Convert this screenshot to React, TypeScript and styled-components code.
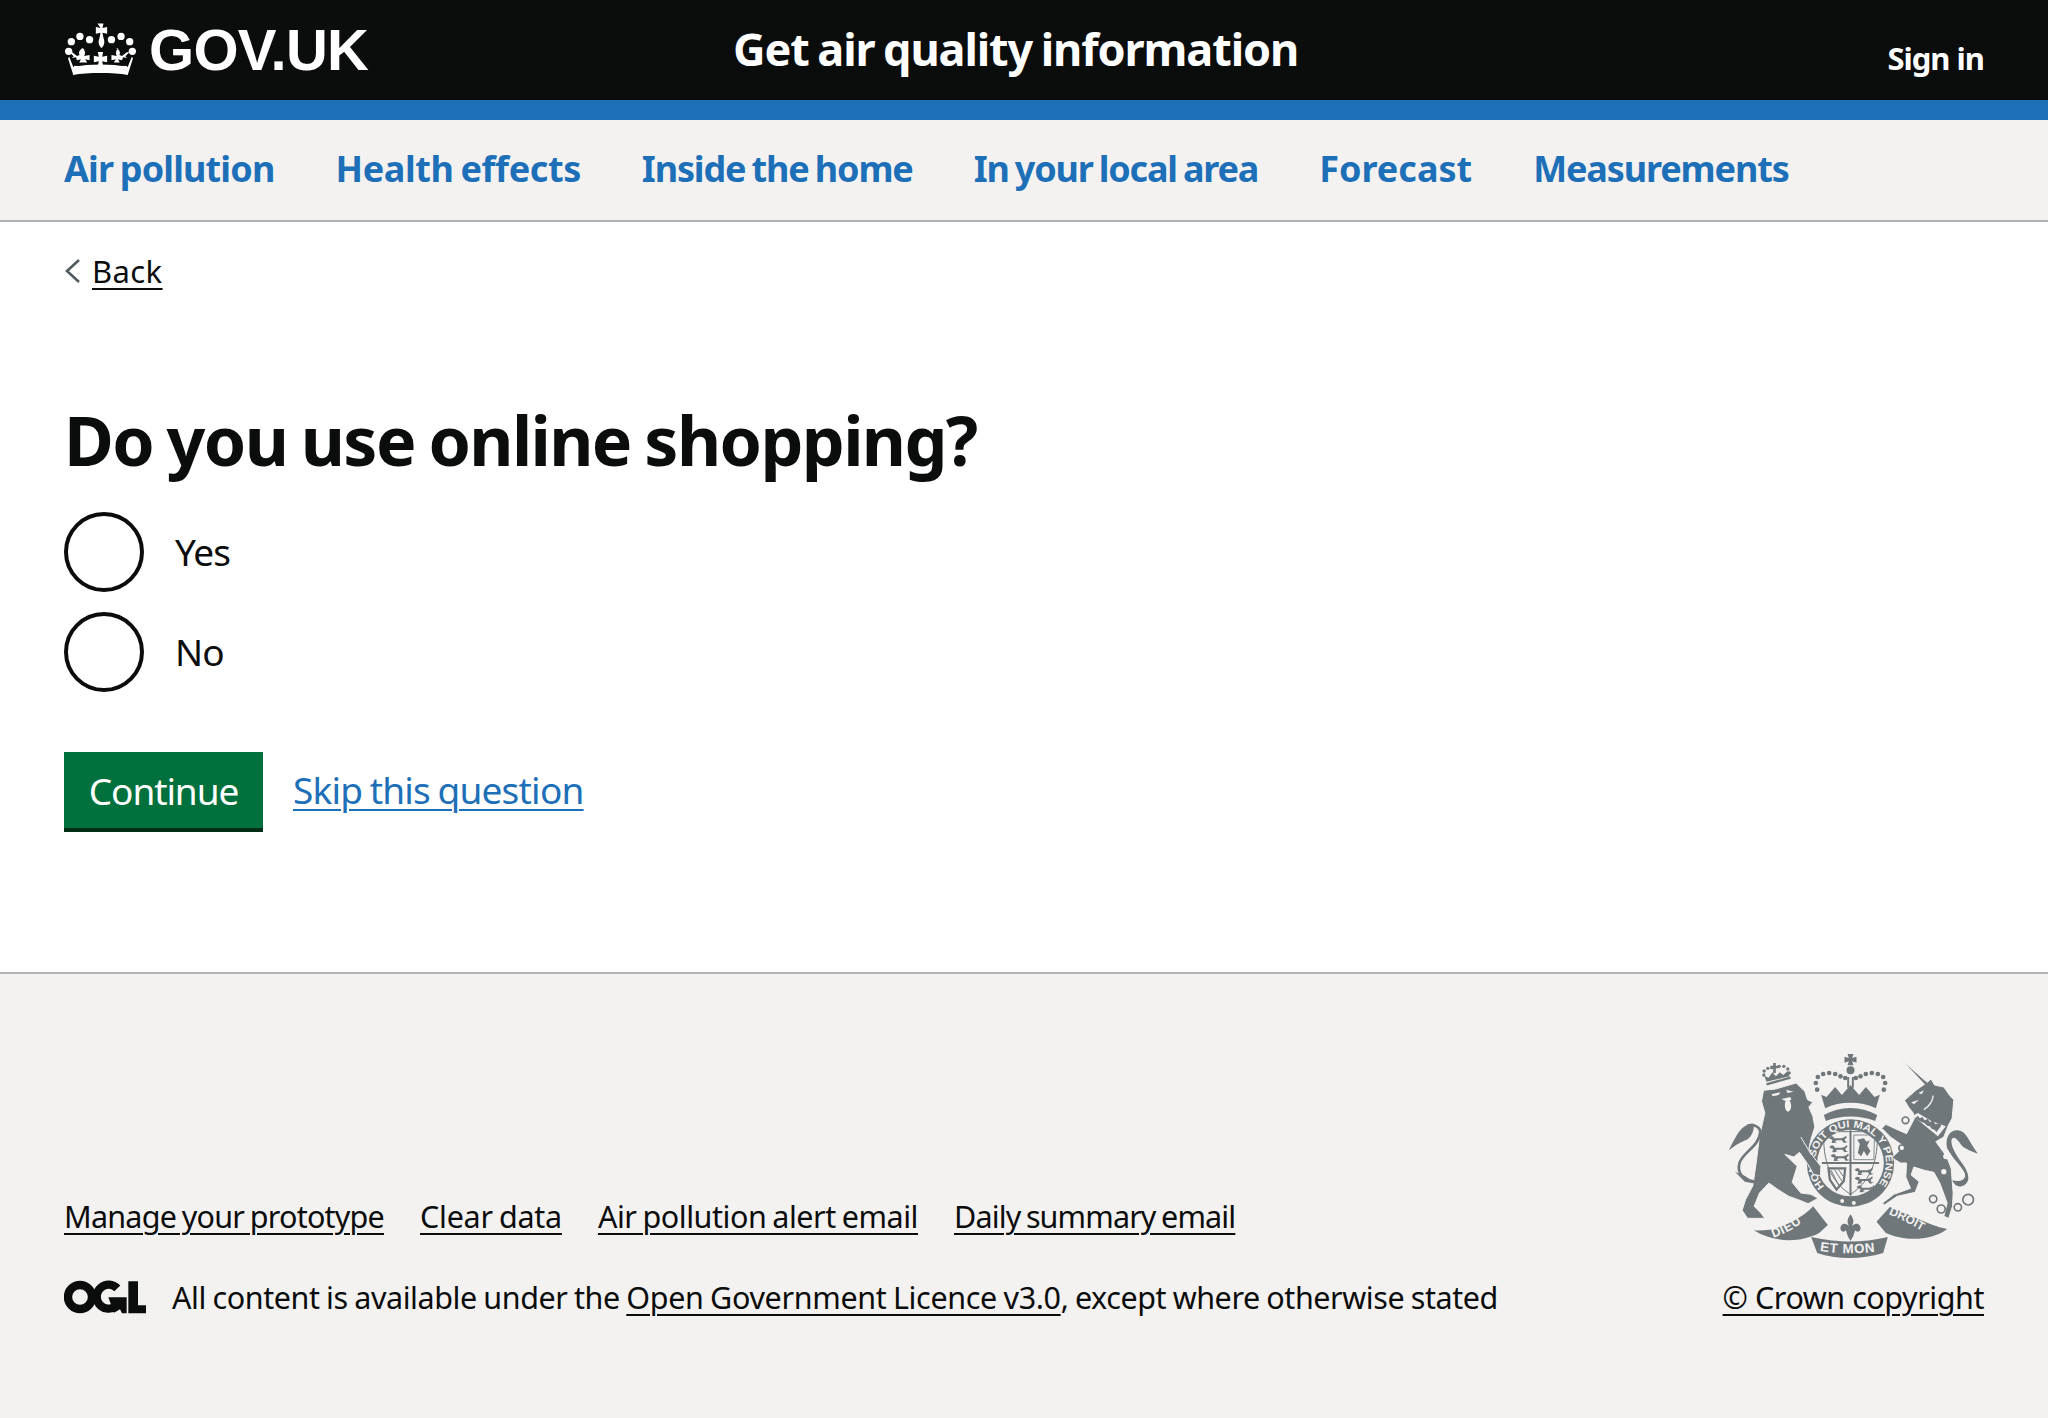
import styled, { createGlobalStyle } from 'styled-components';

const GlobalStyle = createGlobalStyle`
  html, body {
    margin: 0;
    padding: 0;
    background: #fff;
    color: #0b0c0c;
    font-family: "Noto Sans", "Open Sans", Arial, sans-serif;
  }
  * {
    box-sizing: border-box;
  }
`;

const Page = styled.div`
  min-height: 100vh;
  display: flex;
  flex-direction: column;
`;

/** header */
const Header = styled.header`
  height: 120px;
  background: #0b0c0c;
  border-bottom: 20px solid #1d70b8;
  padding: 0 64px;
  display: flex;
  color: #fff;
`;

const Logo = styled.a`
  width: 669px;
  height: 100px;
  display: flex;
  align-items: center;
  gap: 12px;
  padding-bottom: 2px;
  font-family: "Liberation Sans", Arial, sans-serif;
  font-size: 58px;
  font-weight: 700;
  letter-spacing: -0.7px;
`;

const ServiceName = styled.div`
  flex: 1;
  height: 98px;
  line-height: 98px;
  font-size: 45px;
  font-weight: 700;
  letter-spacing: -1.1px;
  word-spacing: -2px;
`;

const SignIn = styled.a`
  align-self: flex-start;
  margin-top: 38px;
  line-height: 40px;
  font-size: 31px;
  font-weight: 700;
  letter-spacing: -1px;
`;

/** navigation */
const Nav = styled.nav`
  height: 102px;
  background: #f3f2f1;
  border-bottom: 2px solid #b1b4b6;
  padding: 0 64px 2px;
  display: flex;
  align-items: center;
  gap: 61px;
`;

const NavLink = styled.a<{ $spacing: number }>`
  font-size: 36px;
  font-weight: 700;
  line-height: 50px;
  letter-spacing: ${(props) => props.$spacing}px;
  word-spacing: -2px;
  color: #1d70b8;
`;

/** main */
const Main = styled.main`
  padding: 29px 64px 140px;
`;

const Back = styled.div`
  height: 40px;
  display: flex;
  align-items: center;
  gap: 12px;
`;

const BackLink = styled.a`
  font-size: 31px;
  line-height: 40px;
  letter-spacing: 0.4px;
  color: #0b0c0c;
  text-decoration: underline;
  text-decoration-thickness: 2px;
  text-underline-offset: 5px;
`;

const Title = styled.h1`
  margin: 109px 0 32px;
  font-size: 68px;
  line-height: 80px;
  font-weight: 700;
  letter-spacing: -1.6px;
  word-spacing: -2.6px;
`;

const RadioList = styled.div`
  display: flex;
  flex-direction: column;
  gap: 20px;
`;

const RadioRow = styled.label`
  height: 80px;
  display: flex;
  align-items: center;
  gap: 31px;
  padding-bottom: 1px;
  font-size: 37px;
  letter-spacing: -0.8px;
`;

const RadioCircle = styled.span`
  width: 80px;
  height: 80px;
  border: 4px solid #0b0c0c;
  border-radius: 50%;
`;

const Actions = styled.div`
  margin-top: 60px;
  display: flex;
  align-items: center;
  gap: 30px;
`;

const Button = styled.button`
  width: 199px;
  height: 80px;
  padding: 0 0 4px;
  border: 0;
  background: #00703c;
  box-shadow: inset 0 -4px 0 #002d18;
  color: #fff;
  font-family: inherit;
  font-size: 37px;
  letter-spacing: -1.1px;
`;

const SkipLink = styled.a`
  margin-bottom: 5px;
  font-size: 37px;
  letter-spacing: -0.77px;
  word-spacing: -1.5px;
  color: #1d70b8;
  text-decoration: underline;
  text-decoration-thickness: 2px;
  text-underline-offset: 5px;
`;

/** footer */
const Footer = styled.footer`
  flex: 1;
  background: #f3f2f1;
  border-top: 2px solid #b1b4b6;
  padding: 79px 64px 101px;
  display: flex;
  justify-content: space-between;
  font-size: 30.5px;
  line-height: 40px;
`;

const FooterLeft = styled.div`
  display: flex;
  flex-direction: column;
  justify-content: flex-end;
  gap: 41px;
`;

const FooterLinks = styled.div`
  display: flex;
  gap: 36px;
  word-spacing: -1.5px;
`;

const FooterLink = styled.a<{ $spacing: number }>`
  color: #0b0c0c;
  letter-spacing: ${(props) => props.$spacing}px;
  text-decoration: underline;
  text-decoration-thickness: 2px;
  text-underline-offset: 5px;
`;

const Licence = styled.div`
  display: flex;
  align-items: center;
  gap: 26px;
  letter-spacing: -0.42px;
  word-spacing: -1px;
`;

const FooterRight = styled.div`
  display: flex;
  flex-direction: column;
  align-items: flex-end;
  gap: 19px;
`;

const CrestWrap = styled.div`
  width: 252px;
  height: 205px;
  margin-right: 5px;
`;

const navItems = [
  { label: 'Air pollution', spacing: -0.85 },
  { label: 'Health effects', spacing: -0.39 },
  { label: 'Inside the home', spacing: -1.16 },
  { label: 'In your local area', spacing: -1.2 },
  { label: 'Forecast', spacing: 0 },
  { label: 'Measurements', spacing: -1.13 },
];

const footerLinks = [
  { label: 'Manage your prototype', spacing: -0.77 },
  { label: 'Clear data', spacing: -0.26 },
  { label: 'Air pollution alert email', spacing: -0.46 },
  { label: 'Daily summary email', spacing: -0.87 },
];

const CrownLogo = () => (
  <svg width="73" height="55" viewBox="40 30 220 165" fill="#fff" aria-hidden="true">
    <path d="M141 34h18l-3 14 14-3v20l-14-3 3 16c4 10 4 22-6 30-10-8-10-20-6-30l3-16-14 3V45l14 3z" />
    <circle cx="117" cy="83" r="11" />
    <circle cx="88" cy="73" r="11" />
    <circle cx="62" cy="89" r="11" />
    <circle cx="54" cy="118" r="11" />
    <circle cx="183" cy="83" r="11" />
    <circle cx="212" cy="73" r="11" />
    <circle cx="238" cy="89" r="11" />
    <circle cx="246" cy="118" r="11" />
    <path d="M97 108c7 8 8 17 4 24l16-3v16l-13-3 6 10H86l5-10-12 3-3-9-12 2 5-5-12-12 8 0 14 11 8-3c-4-7-1-15 10-21z" />
    <path d="M203 108c-7 8-8 17-4 24l-16-3v16l13-3-6 10h18l-5-10 12 3 3-9 12 2-5-5 12-12-8 0-14 11-8-3c4-7 1-15-10-21z" />
    <path d="M142 120h16l-3 14 15-3v20l-15-3 3 14h-16l3-14-15 3v-20l15 3z" />
    <path d="M56 135l12 30c50-10 114-10 164 0l12-30 4 4-16 50c-42-8-122-8-164 0l-16-50z" />
    <rect x="70" y="162" width="160" height="16" />
  </svg>
);

const OglLogo = () => (
  <svg width="82" height="34" viewBox="72 293 246 102" fill="none" aria-hidden="true">
    <circle cx="120" cy="344" r="36" stroke="#0b0c0c" strokeWidth="25" />
    <path d="M232 318a36 36 0 1 0-6 55" stroke="#0b0c0c" strokeWidth="25" />
    <path d="M205 345h55v48h-14l-6-12-18 10z" fill="#0b0c0c" />
    <path d="M265 297h29v72h24v24h-53z" fill="#0b0c0c" />
  </svg>
);

const Ring = ({ x, y, r }: { x: number; y: number; r: number }) => (
  <circle cx={x} cy={y} r={r} fill="#f3f2f1" stroke="#6f777b" strokeWidth="5" />
);

const PassantLion = ({ x, y }: { x: number; y: number }) => (
  <path
    transform={`translate(${x} ${y})`}
    d="M0 6L8 1L15 3L16 8L38 8L47 5L53 0L55 6L49 10L50 17L58 19L46 22L40 14L24 14L19 19L27 21L9 22L12 12L5 10z"
    fill="#6f777b"
  />
);

const archDots = [
  [350, 150], [346, 130], [352, 112], [368, 103], [386, 100], [404, 103], [420, 110], [434, 115],
  [466, 115], [480, 110], [496, 103], [514, 100], [532, 103], [548, 112], [554, 130], [550, 150],
];

const lionCrownDots = [
  [190, 106], [191, 94], [202, 86], [214, 84], [236, 80], [250, 80], [262, 88], [266, 100],
];

// the royal arms, drawn in the coordinates of a 900x870 crop
const Crest = () => (
  <svg width="252" height="205" viewBox="80 40 755 615" aria-hidden="true">
    <defs>
      <path id="garter" d="M372 441A106 106 0 1 1 528 441" />
      <path id="dieu" d="M218 594Q285 572 334 522L360 490" />
      <path id="etmon" d="M358 634Q450 648 542 634L570 628" />
      <path id="droit" d="M564 524Q630 550 694 592L730 616" />
      <clipPath id="shieldClip">
        <circle cx="450" cy="370" r="100" />
      </clipPath>
    </defs>

    {/* royal crown */}
    {archDots.map(([x, y]) => (
      <circle key={`${x}${y}`} cx={x} cy={y} r="7" fill="#6f777b" />
    ))}
    <path d="M441 43H459L455 55L468 51V69L455 65L459 77H441L445 65L432 69V51L445 55z" fill="#6f777b" />
    <circle cx="450" cy="92" r="12" fill="#6f777b" />
    <path d="M440 112h6v32h-6zM454 112h6v32h-6z" fill="#6f777b" />
    <path d="M362 165L378 172L404 142L424 166L450 136L476 166L496 142L522 172L538 165L526 206C480 184 420 184 374 206z" fill="#6f777b" />
    <path d="M370 226C420 198 480 198 530 226L524 244C480 226 420 226 376 244z" fill="#6f777b" />

    {/* garter and shield */}
    <circle cx="450" cy="370" r="131" fill="#6f777b" />
    <circle cx="450" cy="370" r="100" fill="#f3f2f1" />
    <g clipPath="url(#shieldClip)">
      <path d="M370 276H530C534 360 512 424 450 464C388 424 366 360 370 276z" fill="none" stroke="#6f777b" strokeWidth="3" />
      <path d="M450 272V468M364 370H536" stroke="#6f777b" strokeWidth="6" />
      <PassantLion x={384} y={288} />
      <PassantLion x={386} y={316} />
      <PassantLion x={390} y={342} />
      <PassantLion x={462} y={384} />
      <PassantLion x={462} y={410} />
      <PassantLion x={468} y={436} />
      <path d="M460 286H522L520 360H460z" fill="none" stroke="#6f777b" strokeWidth="2.5" />
      <path d="M472 340L478 312L470 300L490 296L498 306L508 302L500 318L510 334L500 350L490 334L482 350z" fill="#6f777b" />
      <path d="M384 386L434 386L430 424L408 450L388 420z" fill="none" stroke="#6f777b" strokeWidth="7" />
      <path d="M392 392L416 440M402 390L424 424M414 390L430 412" stroke="#6f777b" strokeWidth="3" />
    </g>
    <text fill="#f3f2f1" fontFamily="'Liberation Sans', sans-serif" fontSize="30" fontWeight="700">
      <textPath href="#garter" textLength="480" lengthAdjust="spacingAndGlyphs">
        HONI SOIT QUI MAL Y PENSE
      </textPath>
    </text>
    <circle cx="425" cy="484" r="6" fill="#f3f2f1" />
    <circle cx="460" cy="490" r="6" fill="#f3f2f1" />

    {/* lion */}
    <g transform="translate(75 30)" fill="#6f777b">
      <path
        stroke="#f3f2f1"
        strokeWidth="3"
        d="M114 122L150 118L212 100L238 125L246 150L262 158L250 172L262 200L268 232L256 270L250 298L264 322L286 350L285 378L264 374L248 345L222 308L205 322L178 314L215 350L200 398L226 430L256 434L278 446L248 462L218 450L190 440L158 420L130 400L102 430L86 470L106 490L118 506L66 506L50 482L60 450L82 408L92 340L102 260L118 190L108 155z"
      />
      <path d="M86 396C50 388 34 370 42 340C50 310 100 290 104 250C106 232 84 222 66 228" fill="none" stroke="#6f777b" strokeWidth="8" />
      <path d="M84 222C50 222 36 250 10 302C30 285 48 276 64 270C78 262 88 240 84 222z" />
      <path d="M28 366L60 380L90 402L58 396z" />
      <path d="M138 134L164 128L160 136L142 140zM182 120L204 126L186 130z" fill="#f3f2f1" />
      <path d="M168 148L194 142L198 150L192 152C200 166 198 182 188 186C178 184 176 168 180 154z" fill="#f3f2f1" />
      <path d="M226 262L258 316" stroke="#f3f2f1" strokeWidth="3" />
    </g>
    {lionCrownDots.map(([x, y]) => (
      <circle key={`${x}${y}`} cx={x} cy={y} r="5" fill="#6f777b" />
    ))}
    <path d="M198 126L191 108L204 114L216 98L226 110L238 98L248 106L262 94L267 110z" fill="#6f777b" />
    <path d="M198 134L270 114" stroke="#6f777b" strokeWidth="7" />
    <path d="M218 70h8v8h8v8h-8v14h-8v-14h-8v-8h8z" fill="#6f777b" />

    {/* unicorn */}
    <g transform="translate(540 30)" fill="#6f777b">
      <path
        stroke="#f3f2f1"
        strokeWidth="3"
        d="M60 28L140 98L152 88L162 106L190 112L208 138L220 150L215 206L204 226L190 262L166 276L198 320L212 356L218 430L216 470L205 506L190 500L200 460L178 400L160 368L132 362L100 352L92 376L116 396L104 428L50 440L12 466L6 460L40 434L90 416L76 382L78 340L60 340L34 324L70 290L30 262L4 236L16 224L46 238L78 252L102 206L98 190L84 172L72 152L106 122L132 104z"
      />
      <path d="M97 198L112 190L152 214L196 230L172 260z" fill="#f3f2f1" />
      <path d="M104 206l8-8 6 8 8-4 6 10 10-4 6 10 10-6 6 12 14-4 4 8-14 20-6-8-8-2-6-8-8-2-8-8-8-2z" />
      <circle cx="197" cy="320" r="9" fill="#f3f2f1" />
      <circle cx="190" cy="366" r="8" fill="#f3f2f1" />
      <circle cx="166" cy="401" r="8" fill="#f3f2f1" />
      <path d="M200 296C192 262 210 240 232 242C260 246 262 272 292 312C272 304 258 300 244 288C232 270 222 260 216 266C206 276 220 310 246 342C270 376 270 400 244 410C226 414 220 400 215 392C230 396 250 396 254 380C256 360 226 342 200 296z" />
      <path d="M114 130L130 122L124 134zM92 158L116 150L100 164z" fill="#f3f2f1" />
      <path d="M158 138C156 156 146 170 130 180" fill="none" stroke="#f3f2f1" strokeWidth="4" />
    </g>
    <Ring x={615} y={242} r={10} />
    <Ring x={604} y={325} r={9} />
    <Ring x={698} y={478} r={11} />
    <Ring x={722} y={508} r={12} />
    <Ring x={772} y={503} r={11} />
    <Ring x={803} y={480} r={16} />

    {/* motto */}
    <path d="M160 572C240 578 310 530 338 500L382 556L356 580C300 610 220 610 160 572z" fill="#6f777b" />
    <path d="M332 592C420 610 480 610 562 592L548 640C480 660 410 660 350 640z" fill="#6f777b" />
    <path d="M528 546L568 502C620 520 680 556 740 568C690 606 610 604 556 580z" fill="#6f777b" />
    <path d="M450 524C462 540 460 550 454 560C464 546 482 552 480 568C478 578 468 578 464 572L458 590L450 604L442 590L436 572C432 578 422 578 420 568C418 552 436 546 446 560C440 550 438 540 450 524z" fill="#6f777b" />
    <text fill="#f3f2f1" fontFamily="'Liberation Sans', sans-serif" fontSize="38" fontWeight="700" letterSpacing="2">
      <textPath href="#dieu">DIEU</textPath>
    </text>
    <text fill="#f3f2f1" fontFamily="'Liberation Sans', sans-serif" fontSize="40" fontWeight="700" letterSpacing="2">
      <textPath href="#etmon">ET MON</textPath>
    </text>
    <text fill="#f3f2f1" fontFamily="'Liberation Sans', sans-serif" fontSize="36" fontWeight="700">
      <textPath href="#droit">DROIT</textPath>
    </text>
  </svg>
);

const BackChevron = () => (
  <svg width="16" height="24" viewBox="0 0 16 24" fill="none" aria-hidden="true">
    <path d="M15 1L3 12l12 11" stroke="#505a5f" strokeWidth="2.6" />
  </svg>
);

function App() {
  return (
    <Page>
      <GlobalStyle />
      <Header>
        <Logo>
          <CrownLogo />
          GOV.UK
        </Logo>
        <ServiceName>Get air quality information</ServiceName>
        <SignIn>Sign in</SignIn>
      </Header>
      <Nav>
        {navItems.map((item) => (
          <NavLink key={item.label} $spacing={item.spacing}>
            {item.label}
          </NavLink>
        ))}
      </Nav>
      <Main>
        <Back>
          <BackChevron />
          <BackLink>Back</BackLink>
        </Back>
        <Title>Do you use online shopping?</Title>
        <RadioList>
          <RadioRow>
            <RadioCircle />
            Yes
          </RadioRow>
          <RadioRow>
            <RadioCircle />
            No
          </RadioRow>
        </RadioList>
        <Actions>
          <Button>Continue</Button>
          <SkipLink>Skip this question</SkipLink>
        </Actions>
      </Main>
      <Footer>
        <FooterLeft>
          <FooterLinks>
            {footerLinks.map((item) => (
              <FooterLink key={item.label} $spacing={item.spacing}>
                {item.label}
              </FooterLink>
            ))}
          </FooterLinks>
          <Licence>
            <OglLogo />
            <span>
              All content is available under the <FooterLink $spacing={-0.35}>Open Government Licence v3.0</FooterLink>,
              except where otherwise stated
            </span>
          </Licence>
        </FooterLeft>
        <FooterRight>
          <CrestWrap>
            <Crest />
          </CrestWrap>
          <FooterLink $spacing={-0.45}>© Crown copyright</FooterLink>
        </FooterRight>
      </Footer>
    </Page>
  );
}

export default App;
